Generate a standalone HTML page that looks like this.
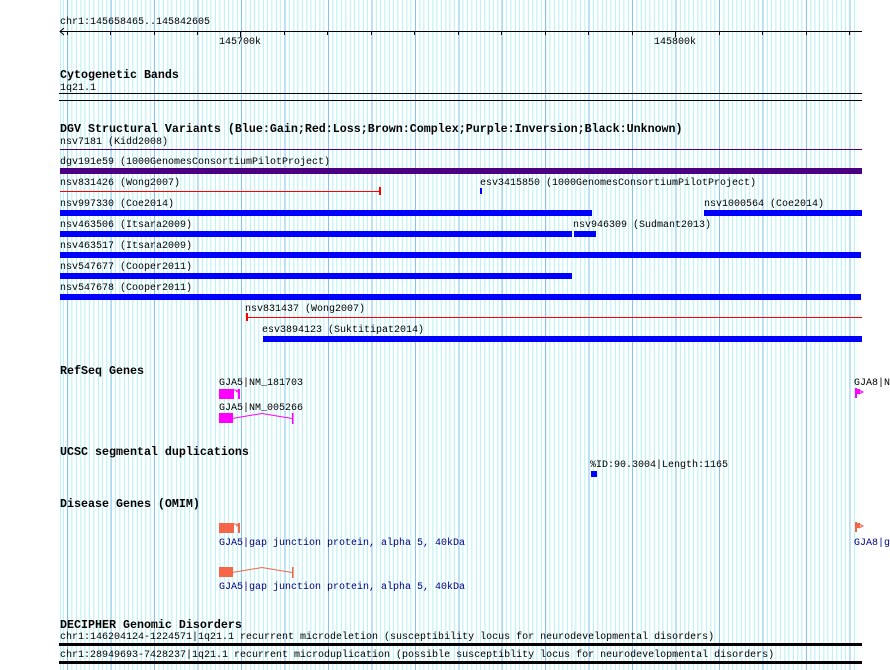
<!DOCTYPE html>
<html><head><meta charset="utf-8"><style>
html,body{margin:0;padding:0;background:#fff;}
body{width:890px;height:670px;position:relative;overflow:hidden;font-family:"Liberation Mono",monospace;font-size:10px;color:#000;}
#grid{position:absolute;left:60px;top:0;width:798px;height:670px;
background-image:repeating-linear-gradient(90deg,transparent 0,transparent 7.2px,#86c4ec 7.2px,#86c4ec 8.2px,transparent 8.2px,transparent 43.45px),
repeating-linear-gradient(90deg,#b4f0f2 0,#b4f0f2 1px,transparent 1px,transparent 4.345px);
background-position:0 0,2.86px 0;}
.t{position:absolute;white-space:pre;line-height:12px;margin-top:2px;}
.h{position:absolute;white-space:pre;line-height:12px;font-weight:bold;font-size:11.67px;margin-top:1px;}
.b{position:absolute;}
.nv{color:#000080;}
</style></head><body>
<div id="grid"></div>

<div class="t" style="left:60px;top:15px">chr1:145658465..145842605</div>
<div class="b" style="left:60px;top:31px;width:802px;height:1px;background:#000"></div>
<svg class="b" style="left:59px;top:28px" width="6" height="8"><path d="M5 0 L1 3.5 L5 7" fill="none" stroke="#000"/></svg>
<div class="b" style="left:67px;top:31px;width:1px;height:4px;background:#000"></div>
<div class="b" style="left:110px;top:31px;width:1px;height:4px;background:#000"></div>
<div class="b" style="left:154px;top:31px;width:1px;height:4px;background:#000"></div>
<div class="b" style="left:197px;top:31px;width:1px;height:4px;background:#000"></div>
<div class="b" style="left:240px;top:31px;width:1px;height:6px;background:#000"></div>
<div class="b" style="left:284px;top:31px;width:1px;height:4px;background:#000"></div>
<div class="b" style="left:327px;top:31px;width:1px;height:4px;background:#000"></div>
<div class="b" style="left:371px;top:31px;width:1px;height:4px;background:#000"></div>
<div class="b" style="left:414px;top:31px;width:1px;height:4px;background:#000"></div>
<div class="b" style="left:458px;top:31px;width:1px;height:4px;background:#000"></div>
<div class="b" style="left:501px;top:31px;width:1px;height:4px;background:#000"></div>
<div class="b" style="left:545px;top:31px;width:1px;height:4px;background:#000"></div>
<div class="b" style="left:588px;top:31px;width:1px;height:4px;background:#000"></div>
<div class="b" style="left:632px;top:31px;width:1px;height:4px;background:#000"></div>
<div class="b" style="left:675px;top:31px;width:1px;height:6px;background:#000"></div>
<div class="b" style="left:719px;top:31px;width:1px;height:4px;background:#000"></div>
<div class="b" style="left:762px;top:31px;width:1px;height:4px;background:#000"></div>
<div class="b" style="left:806px;top:31px;width:1px;height:4px;background:#000"></div>
<div class="b" style="left:849px;top:31px;width:1px;height:4px;background:#000"></div>
<div class="t" style="left:219px;top:35px">145700k</div>
<div class="t" style="left:654px;top:35px">145800k</div>

<div class="h" style="left:60px;top:68px">Cytogenetic Bands</div>
<div class="t" style="left:60px;top:81px">1q21.1</div>
<div class="b" style="left:59px;top:93px;width:803px;height:1px;background:#000"></div>
<div class="b" style="left:59px;top:100px;width:803px;height:1px;background:#000"></div>

<div class="h" style="left:60px;top:122px">DGV Structural Variants (Blue:Gain;Red:Loss;Brown:Complex;Purple:Inversion;Black:Unknown)</div>
<div class="t" style="left:60px;top:135px">nsv7181 (Kidd2008)</div>
<div class="b" style="left:60px;top:149px;width:802px;height:1px;background:#4b0082"></div>
<div class="t" style="left:60px;top:155px">dgv191e59 (1000GenomesConsortiumPilotProject)</div>
<div class="b" style="left:60px;top:168px;width:802px;height:6px;background:#4b0082"></div>

<div class="t" style="left:60px;top:176px">nsv831426 (Wong2007)</div>
<div class="b" style="left:60px;top:191px;width:320px;height:1px;background:#f00"></div>
<div class="b" style="left:379px;top:187px;width:2px;height:8px;background:#f00"></div>
<div class="t" style="left:480px;top:176px">esv3415850 (1000GenomesConsortiumPilotProject)</div>
<div class="b" style="left:480px;top:188px;width:2px;height:6px;background:#00f"></div>

<div class="t" style="left:60px;top:197px">nsv997330 (Coe2014)</div>
<div class="b" style="left:60px;top:210px;width:532px;height:6px;background:#00f"></div>
<div class="t" style="left:704px;top:197px">nsv1000564 (Coe2014)</div>
<div class="b" style="left:704px;top:210px;width:158px;height:6px;background:#00f"></div>

<div class="t" style="left:60px;top:218px">nsv463506 (Itsara2009)</div>
<div class="b" style="left:60px;top:231px;width:512px;height:6px;background:#00f"></div>
<div class="t" style="left:573px;top:218px">nsv946309 (Sudmant2013)</div>
<div class="b" style="left:574px;top:231px;width:22px;height:6px;background:#00f"></div>

<div class="t" style="left:60px;top:239px">nsv463517 (Itsara2009)</div>
<div class="b" style="left:60px;top:252px;width:801px;height:6px;background:#00f"></div>
<div class="t" style="left:60px;top:260px">nsv547677 (Cooper2011)</div>
<div class="b" style="left:60px;top:273px;width:512px;height:6px;background:#00f"></div>
<div class="t" style="left:60px;top:281px">nsv547678 (Cooper2011)</div>
<div class="b" style="left:60px;top:294px;width:801px;height:6px;background:#00f"></div>

<div class="t" style="left:245px;top:302px">nsv831437 (Wong2007)</div>
<div class="b" style="left:246px;top:317px;width:616px;height:1px;background:#f00"></div>
<div class="b" style="left:246px;top:313px;width:2px;height:8px;background:#f00"></div>
<div class="t" style="left:262px;top:323px">esv3894123 (Suktitipat2014)</div>
<div class="b" style="left:263px;top:336px;width:599px;height:6px;background:#00f"></div>

<div class="h" style="left:60px;top:364px">RefSeq Genes</div>
<div class="t" style="left:219px;top:376px">GJA5|NM_181703</div>
<div class="b" style="left:219px;top:389px;width:15px;height:10px;background:#f0f"></div>
<svg class="b" style="left:234px;top:389px" width="6" height="10"><path d="M0 1 L2 1 L3 3 L4 1" fill="none" stroke="#f0f"/><rect x="4" y="0" width="2" height="10" fill="#f0f"/></svg>
<div class="t" style="left:219px;top:401px">GJA5|NM_005266</div>
<div class="b" style="left:219px;top:413px;width:14px;height:10px;background:#f0f"></div>
<svg class="b" style="left:232px;top:410px" width="64" height="16"><polyline points="0,8.5 30,3.5 60,8.5" fill="none" stroke="#f0f" stroke-width="1"/><rect x="60" y="3" width="1.5" height="11" fill="#f0f"/></svg>
<div class="t" style="left:854px;top:376px">GJA8|N</div>
<svg class="b" style="left:855px;top:388px" width="10" height="10"><rect x="0" y="0" width="2" height="10" fill="#f0f"/><rect x="2" y="1" width="3" height="5" fill="#f0f"/><path d="M4 2 L8 4 L4 6" fill="none" stroke="#f0f"/></svg>

<div class="h" style="left:60px;top:445px">UCSC segmental duplications</div>
<div class="t" style="left:590px;top:458px">%ID:90.3004|Length:1165</div>
<div class="b" style="left:591px;top:471px;width:6px;height:6px;background:#00f"></div>

<div class="h" style="left:60px;top:497px">Disease Genes (OMIM)</div>
<div class="b" style="left:219px;top:523px;width:15px;height:10px;background:#f46647"></div>
<svg class="b" style="left:234px;top:523px" width="6" height="10"><path d="M0 1 L2 1 L3 3 L4 1" fill="none" stroke="#f46647"/><rect x="4" y="0" width="2" height="10" fill="#f46647"/></svg>
<div class="t nv" style="left:219px;top:536px">GJA5|gap junction protein, alpha 5, 40kDa</div>
<div class="b" style="left:219px;top:567px;width:14px;height:10px;background:#f46647"></div>
<svg class="b" style="left:232px;top:564px" width="64" height="16"><polyline points="0,8.5 30,3.5 60,8.5" fill="none" stroke="#f46647" stroke-width="1"/><rect x="60" y="3" width="1.5" height="11" fill="#f46647"/></svg>
<div class="t nv" style="left:219px;top:580px">GJA5|gap junction protein, alpha 5, 40kDa</div>
<svg class="b" style="left:855px;top:522px" width="10" height="10"><rect x="0" y="0" width="2" height="10" fill="#f46647"/><rect x="2" y="1" width="3" height="5" fill="#f46647"/><path d="M4 2 L8 4 L4 6" fill="none" stroke="#f46647"/></svg>
<div class="t nv" style="left:854px;top:536px">GJA8|g</div>

<div class="h" style="left:60px;top:618px">DECIPHER Genomic Disorders</div>
<div class="t" style="left:60px;top:630px">chr1:146204124-1224571|1q21.1 recurrent microdeletion (susceptibility locus for neurodevelopmental disorders)</div>
<div class="b" style="left:59px;top:643px;width:803px;height:3px;background:#000"></div>
<div class="t" style="left:60px;top:648px">chr1:28949693-7428237|1q21.1 recurrent microduplication (possible susceptiblity locus for neurodevelopmental disorders)</div>
<div class="b" style="left:59px;top:661px;width:803px;height:3px;background:#000"></div>
</body></html>
